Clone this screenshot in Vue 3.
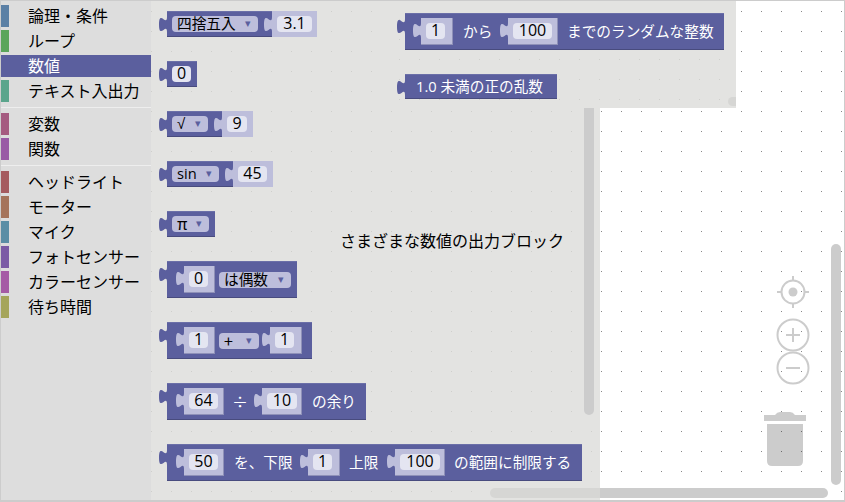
<template>
  <div class="app">
    <!-- left category list -->
    <aside class="toolbox">
      <template v-for="(group, g) in categories" :key="g">
        <div v-if="g > 0" class="sep"></div>
        <div
          v-for="cat in group"
          :key="cat.name"
          class="cat"
          :class="{ selected: cat.selected }"
        >
          <span class="stripe" :style="{ background: cat.color }"></span>
          <span class="cat-name">{{ cat.name }}</span>
        </div>
      </template>
    </aside>

    <!-- flyout with number blocks -->
    <section class="flyout">
      <div class="col">
        <div v-for="(b, i) in leftBlocks" :key="i" class="block" :class="b.size" :style="{ paddingRight: (b.pr || 0) + 'px' }">
          <svg class="tab" width="9" height="17" viewBox="-8 0 9 17"><path :d="tabPath" fill="#5b5f9e" /></svg>
          <template v-for="(p, j) in b.parts" :key="j">
            <span v-if="p.k === 'drop'" class="drop" :style="{ width: p.w + 'px', marginLeft: p.m + 'px' }">
              <span :class="p.sym">{{ p.text }}</span><span class="arrow">▾</span>
            </span>
            <span v-else-if="p.k === 'field'" class="field" :style="{ width: p.f + 'px', marginLeft: p.m + 'px' }">{{ p.text }}</span>
            <span v-else-if="p.k === 'label'" class="label" :class="p.sym" :style="{ width: p.w + 'px', paddingLeft: p.m + 'px' }">{{ p.text }}</span>
            <span v-else class="slot" :class="{ edge: p.k === 'edge' }" :style="{ width: p.w + 'px', marginLeft: p.m + 'px' }">
              <svg class="notch" width="9" height="17" viewBox="-8 0 9 17"><path :d="tabPath" fill="#bdbedb" /></svg>
              <span class="field" :style="{ width: p.f + 'px' }">{{ p.text }}</span>
            </span>
          </template>
        </div>
      </div>
      <div class="vscroll"></div>
      <div class="hscroll"></div>
      <div class="hint">さまざまな数値の出力ブロック</div>
    </section>

    <!-- second column of the flyout, lies over the workspace -->
    <section class="flyout-top">
      <div v-for="(b, i) in topBlocks" :key="i" class="block" :class="b.size">
        <svg class="tab" width="9" height="17" viewBox="-8 0 9 17"><path :d="tabPath" fill="#5b5f9e" /></svg>
        <template v-for="(p, j) in b.parts" :key="j">
          <span v-if="p.k === 'label'" class="label" :style="{ width: p.w + 'px', paddingLeft: p.m + 'px' }">{{ p.text }}</span>
          <span v-else class="slot" :style="{ width: p.w + 'px', marginLeft: p.m + 'px' }">
            <svg class="notch" width="9" height="17" viewBox="-8 0 9 17"><path :d="tabPath" fill="#bdbedb" /></svg>
            <span class="field" :style="{ width: p.f + 'px' }">{{ p.text }}</span>
          </span>
        </template>
      </div>
      <div class="corner"></div>
    </section>

    <!-- workspace controls -->
    <svg class="controls" width="60" height="195" viewBox="0 0 60 195">
      <g fill="none" stroke="#ccc" stroke-width="2">
        <circle cx="30" cy="17" r="11.5" />
        <path d="M30 1v5M30 28v5M14 17h5M41 17h5" />
        <circle cx="30" cy="60" r="15.5" />
        <path d="M23 60h14M30 53v14" />
        <circle cx="30" cy="93" r="15.5" />
        <path d="M23 93h14" />
      </g>
      <circle cx="30" cy="17" r="4.5" fill="#ccc" />
      <g fill="#000" fill-opacity="0.2">
        <path d="M1 140h42v6H1zM12 140q2-3 5-3h10q3 0 5 3zM4 149h36v37q0 5-5 5H9q-5 0-5-5z" />
      </g>
    </svg>
    <div class="bar bar-v"></div>
    <div class="bar bar-h"></div>
  </div>
</template>

<script setup>
// tab of an output block, same curve for the notch of an input
const tabPath = 'M0,1 c0,10 -8,-8 -8,7.5 s8,-2.5 8,7.5 z'

const categories = [
  [
    { name: '論理・条件', color: '#5b80a5' },
    { name: 'ループ', color: '#5ba55b' },
    { name: '数値', color: '#5b5f9e', selected: true },
    { name: 'テキスト入出力', color: '#5ba58c' }
  ],
  [
    { name: '変数', color: '#a55b80' },
    { name: '関数', color: '#995ba5' }
  ],
  [
    { name: 'ヘッドライト', color: '#a55b5f' },
    { name: 'モーター', color: '#a5745b' },
    { name: 'マイク', color: '#5b8ea5' },
    { name: 'フォトセンサー', color: '#7b5ba5' },
    { name: 'カラーセンサー', color: '#a55ba5' },
    { name: '待ち時間', color: '#a5a55b' }
  ]
]

const leftBlocks = [
  { size: 'short', parts: [{ k: 'drop', text: '四捨五入', w: 86, m: 5 }, { k: 'edge', text: '3.1', w: 45, f: 35, m: 14 }] },
  { size: 'short', pr: 6, parts: [{ k: 'field', text: '0', f: 19, m: 5 }] },
  { size: 'short', parts: [{ k: 'drop', text: '√', w: 36, m: 5, sym: 'root' }, { k: 'edge', text: '9', w: 31, f: 20, m: 14 }] },
  { size: 'short', parts: [{ k: 'drop', text: 'sin', w: 47, m: 5 }, { k: 'edge', text: '45', w: 40, f: 29, m: 14 }] },
  { size: 'short', pr: 6, parts: [{ k: 'drop', text: 'π', w: 37, m: 5, sym: 'sym' }] },
  { size: 'tall', pr: 6, parts: [{ k: 'slot', text: '0', w: 31, f: 19, m: 17 }, { k: 'drop', text: 'は偶数', w: 72, m: 4 }] },
  { size: 'tall', pr: 10, parts: [
    { k: 'slot', text: '1', w: 31, f: 19, m: 17 },
    { k: 'drop', text: '+', w: 40, m: 4, sym: 'sym' },
    { k: 'slot', text: '1', w: 32, f: 19, m: 11 }
  ] },
  { size: 'tall', parts: [
    { k: 'slot', text: '64', w: 40, f: 29, m: 17 },
    { k: 'label', text: '÷', w: 38, m: 8, sym: 'sym' },
    { k: 'slot', text: '10', w: 40, f: 30, m: 0 },
    { k: 'label', text: 'の余り', w: 64, m: 10 }
  ] },
  { size: 'tall', parts: [
    { k: 'slot', text: '50', w: 40, f: 29, m: 17 },
    { k: 'label', text: 'を、下限', w: 84, m: 10 },
    { k: 'slot', text: '1', w: 32, f: 19, m: 0 },
    { k: 'label', text: '上限', w: 55, m: 9 },
    { k: 'slot', text: '100', w: 50, f: 40, m: 0 },
    { k: 'label', text: 'の範囲に制限する', w: 137, m: 9 }
  ] }
]

const topBlocks = [
  { size: 'tall', parts: [
    { k: 'slot', text: '1', w: 32, f: 19, m: 16 },
    { k: 'label', text: 'から', w: 55, m: 10 },
    { k: 'slot', text: '100', w: 50, f: 39, m: 0 },
    { k: 'label', text: 'までのランダムな整数', w: 166, m: 9 }
  ] },
  { size: 'thin', parts: [{ k: 'label', text: '1.0 未満の正の乱数', w: 152, m: 11 }] }
]
</script>

<style scoped>
.app {
  position: relative;
  box-sizing: border-box;
  width: 845px;
  height: 502px;
  overflow: hidden;
  border: 1px solid #ccc;
  border-bottom-width: 2px;
  display: flex;
  font-family: "Open Sans", "Noto Sans CJK JP", sans-serif;
  background-color: #fff;
  background-image: conic-gradient(from 270deg at 1px 1px, #888 25%, transparent 0);
  background-size: 20px 20px;
  background-position: 0 10px;
}

/* toolbox */
.toolbox {
  width: 150px;
  flex: none;
  box-sizing: border-box;
  padding-top: 4px;
  display: flex;
  flex-direction: column;
  gap: 3px;
  background: #ddd;
  font-size: 16px;
  color: #000;
}
.cat {
  height: 22px;
  display: flex;
  align-items: center;
  line-height: 20px;
}
.cat-name { padding-bottom: 1px; }
.cat.selected { background: #5b5f9e; color: #fff; }
.stripe { width: 8px; height: 22px; margin-right: 19px; flex: none; }
.sep { height: 1px; margin: 2px 0 2px; background: #eee; }

/* flyout */
.flyout {
  position: relative;
  width: 449px;
  flex: none;
  background-color: #e3e3e1;
  background-image: conic-gradient(from 270deg at 1px 1px, #cfcfcc 25%, transparent 0);
  background-size: 20px 20px;
  background-position: 0 10px;
}
.col {
  display: flex;
  flex-direction: column;
  align-items: flex-start;
  gap: 24px;
  padding: 10px 0 0 16px;
}
.flyout-top {
  position: absolute;
  left: 389px;
  top: -1px;
  width: 346px;
  height: 108px;
  box-sizing: border-box;
  padding: 13px 0 0 15px;
  display: flex;
  flex-direction: column;
  align-items: flex-start;
  gap: 24px;
  background-color: #e3e3e1;
  background-image: conic-gradient(from 270deg at 1px 1px, #cfcfcc 25%, transparent 0);
  background-size: 20px 20px;
  background-position: 9px 19px;
}
.corner {
  position: absolute;
  right: 0;
  bottom: 2px;
  width: 8px;
  height: 9px;
  border-radius: 5px 0 0 5px;
  background: #d6d6d4;
}
.vscroll {
  position: absolute;
  left: 433px;
  top: 0;
  width: 10px;
  height: 414px;
  border-radius: 5px;
  background: #ccc;
}
.hscroll {
  position: absolute;
  right: 0;
  top: 487px;
  width: 110px;
  height: 10px;
  border-radius: 5px 0 0 5px;
  background: #d6d6d4;
}
.hint {
  position: absolute;
  left: 189px;
  top: 227px;
  font-size: 16px;
  line-height: 24px;
  color: #000;
  font-family: "Noto Sans CJK JP", sans-serif;
}

/* blocks */
.block {
  position: relative;
  display: inline-flex;
  align-items: center;
  background: #5b5f9e;
  box-shadow: inset 0 -1px #484b7e, inset 0 1px #6b6fa8;
  color: #fff;
  font-size: 14.67px;
}
.short { height: 26px; }
.tall { height: 37px; }
.thin { height: 25px; }
.tab { position: absolute; left: -8px; top: 5px; }
.notch { position: absolute; left: -8px; top: 4px; }
.slot {
  position: relative;
  box-sizing: border-box;
  flex: none;
  height: 27px;
  display: flex;
  align-items: center;
  padding-left: 5px;
  background: #bdbedb;
  border-right: 1px solid #8f91b8;
  border-bottom: 1px solid #8f91b8;
}
.slot.edge { height: 26px; border: 0; }
.slot.edge .notch { top: 5px; }
.field {
  display: inline-block;
  box-sizing: border-box;
  height: 16px;
  line-height: 15px;
  font-size: 16px;
  text-align: center;
  border-radius: 4px;
  background: #e4e5f1;
  color: #000;
  flex: none;
}
.drop {
  box-sizing: border-box;
  flex: none;
  height: 16px;
  line-height: 15px;
  display: flex;
  justify-content: space-between;
  padding: 0 7px 0 5px;
  border-radius: 4px;
  background: #bdbedb;
  color: #000;
}
.arrow { color: #5b5f9e; font-size: 11px; line-height: 13px; }
.label { box-sizing: border-box; flex: none; white-space: nowrap; padding-bottom: 2px; }
.sym { font-family: "Noto Sans CJK JP", sans-serif; font-size: 16px; }
.root { font-family: "Liberation Sans", sans-serif; font-size: 15px; }

/* workspace */
.controls { position: absolute; left: 762px; top: 274px; }
.bar { position: absolute; background: #ccc; border-radius: 5px; }
.bar-v { left: 830px; top: 243px; width: 10px; height: 241px; }
.bar-h { left: 599px; top: 487px; width: 228px; height: 10px; border-radius: 0 5px 5px 0; }
</style>

<style>
html, body { margin: 0; padding: 0; }
</style>
